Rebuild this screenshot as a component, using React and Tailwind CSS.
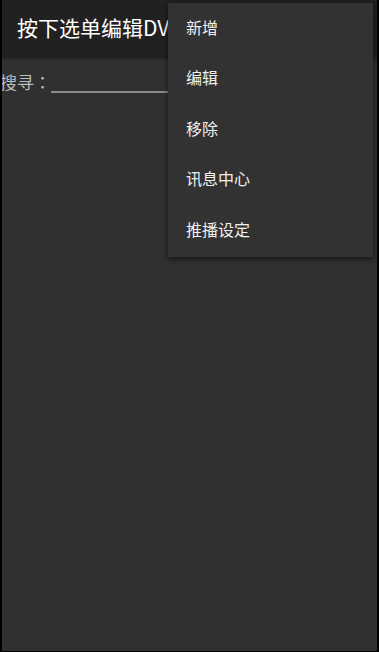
export default function App() {
  const items = ["新增", "编辑", "移除", "讯息中心", "推播设定"];
  return (
    <div
      className="relative w-[379px] h-[652px] overflow-hidden bg-[#303030] border-l-2 border-r-2 border-b border-black"
      style={{ fontFamily: '"Noto Sans CJK SC", "Noto Sans", sans-serif' }}
    >
      <div className="h-[57px] bg-[#212121] flex items-center pl-[15px] pb-[2px] shadow-[0_1px_3px_rgba(0,0,0,0.5)]">
        <span className="text-[21px] text-white whitespace-nowrap font-normal leading-none">按下选单编辑DVD</span>
      </div>
      <div className="flex items-end h-[40px] -ml-[2px]">
        <span className="text-[17px] text-[#bdbdbd] leading-none mb-[7px]">
          搜寻<span style={{ fontFamily: '"Noto Sans CJK TC", sans-serif' }}>：</span>
        </span>
        <div className="flex-1 h-[2px] bg-[#8a8a8a] mb-[4px] mr-[10px]"></div>
      </div>
      <div className="absolute left-[166px] top-[3px] w-[205px] pb-[1px] bg-[#323232] shadow-[0_2px_6px_rgba(0,0,0,0.6)]">
        {items.map((t) => (
          <div key={t} className="h-[50.5px] flex items-center pl-[18px] pb-[3px] text-[16px] text-[#f0f0f0] leading-none">
            {t}
          </div>
        ))}
      </div>
    </div>
  );
}
